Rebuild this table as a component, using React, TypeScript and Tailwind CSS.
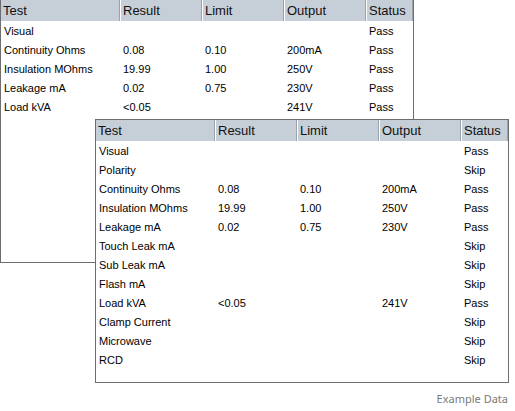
type Row = readonly [string, string, string, string, string];

const COLS = [
	{ label: "Test", w: "w-[119px]" },
	{ label: "Result", w: "w-[82px]" },
	{ label: "Limit", w: "w-[82px]" },
	{ label: "Output", w: "w-[82px]" },
	{ label: "Status", w: "w-[47px]" },
] as const;

const BACK_ROWS: readonly Row[] = [
	["Visual", "", "", "", "Pass"],
	["Continuity Ohms", "0.08", "0.10", "200mA", "Pass"],
	["Insulation MOhms", "19.99", "1.00", "250V", "Pass"],
	["Leakage mA", "0.02", "0.75", "230V", "Pass"],
	["Load kVA", "<0.05", "", "241V", "Pass"],
];

const FRONT_ROWS: readonly Row[] = [
	["Visual", "", "", "", "Pass"],
	["Polarity", "", "", "", "Skip"],
	["Continuity Ohms", "0.08", "0.10", "200mA", "Pass"],
	["Insulation MOhms", "19.99", "1.00", "250V", "Pass"],
	["Leakage mA", "0.02", "0.75", "230V", "Pass"],
	["Touch Leak mA", "", "", "", "Skip"],
	["Sub Leak mA", "", "", "", "Skip"],
	["Flash mA", "", "", "", "Skip"],
	["Load kVA", "<0.05", "", "241V", "Pass"],
	["Clamp Current", "", "", "", "Skip"],
	["Microwave", "", "", "", "Skip"],
	["RCD", "", "", "", "Skip"],
];

function ResultTable({ rows, className }: { readonly rows: readonly Row[]; readonly className: string }) {
	return (
		<div className={`absolute w-[414px] h-[264px] bg-white border border-[#6e6e6e] ${className}`}>
			<div className="flex h-[21px] bg-[#c6ced8]">
				{COLS.map((c, i) => (
					<div
						key={c.label}
						className={`${c.w} shrink-0 h-full flex items-center pl-[2px] text-[13px] text-[#111] border-r border-[#9aa3ad] ${i > 0 ? "border-l border-l-white" : ""}`}
					>
						{c.label}
					</div>
				))}
			</div>
			<div className="pt-px">
				{rows.map((r) => (
					<div key={r[0]} className="flex h-[19px] items-center text-[11px] text-black">
						{r.map((cell, i) => (
							<div key={i} className={`${COLS[i].w} shrink-0 pl-[3px] whitespace-nowrap`}>
								{cell}
							</div>
						))}
					</div>
				))}
			</div>
		</div>
	);
}

export default function App() {
	return (
		<div
			className="relative w-[515px] h-[411px] bg-white overflow-hidden"
			style={{ fontFamily: '"Liberation Sans", Arial, sans-serif' }}
		>
			<ResultTable rows={BACK_ROWS} className="left-0 -top-px" />
			<ResultTable rows={FRONT_ROWS} className="left-[95px] top-[119px]" />
			<div className="absolute right-[7px] bottom-[4px] text-[11px] text-[#7a7a7a] font-['Noto_Sans',sans-serif]">
				Example Data
			</div>
		</div>
	);
}
